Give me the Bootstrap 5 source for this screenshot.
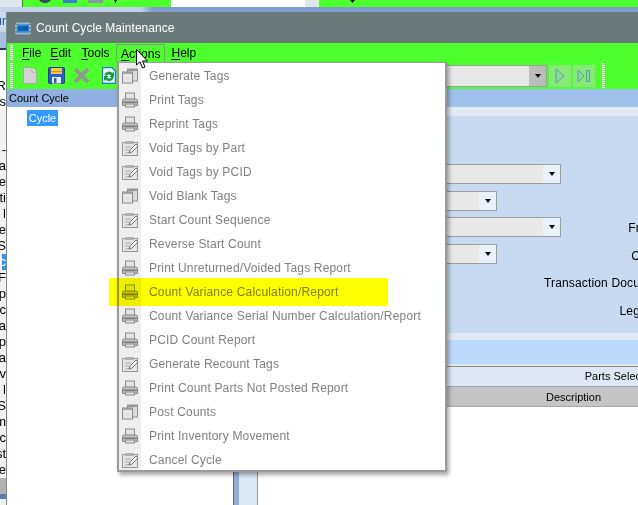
<!DOCTYPE html>
<html lang="en">
<head>
<meta charset="utf-8">
<title>Count Cycle Maintenance</title>
<link rel="stylesheet" href="https://cdn.jsdelivr.net/npm/bootstrap@5.3.0/dist/css/bootstrap.min.css">
<style>
html,body{margin:0;width:638px;height:505px;overflow:hidden;background:#fff}
body{font:12px/16px "Liberation Sans",Arial,sans-serif;color:#000}
.shot{position:relative;width:638px;height:505px;overflow:hidden}
.task-top{height:7px;background:#4eff2e;overflow:hidden}
.task-left{width:23px;background:#dfe6ee;border-right:1px solid #3c7a3c}
.task-blob{height:7px;margin-top:-2px}
.task-field{width:148px;background:#fff;margin-left:auto;display:flex;justify-content:end}
.task-field i{display:block;width:14px;background:#e2e6ea}
.task-strip{height:5px;background:linear-gradient(90deg,#c3d2e6 0,#c3d2e6 22%,#7f9ccb 24%,#7f9ccb 100%)}
.desk{height:493px}
.desk-left{width:6px;overflow:hidden;background:#f2f2f2;flex:none}
.desk-head{height:38px;background:linear-gradient(#c9daf0 0,#c9daf0 50%,#a9bfdf 55%,#a9bfdf 95%,#243a6a 95%);color:#2a5a9a;padding-top:1px;display:flex;justify-content:flex-end}
.desk-gap{height:28px;background:#fff}
.desk-row{height:16px;display:flex;justify-content:flex-end;white-space:nowrap;font-size:13px;background:#f2f2f2}
.desk-row.plain{background:#fff}
.desk-row.sel{background:#3390f0;color:#fff;margin-left:2px}
.desk-foot{height:16px;background:#b2b2b2}
.desk-end{height:5px;background:#5f7fa8}
.win{flex:1 1 auto;min-width:0;border-left:1px solid #7c8c8c;display:flex;flex-direction:column}
.win-title{height:31px;background:#6a7a7a;color:#fff;font-size:12px;letter-spacing:.05px;display:flex;align-items:center;padding:1px 0 0 8px;gap:5px}
.win-menu{height:19px;background:#4eff2e;display:flex;align-items:center;position:relative;font-size:12px}
.grip{width:3px;background:repeating-linear-gradient(#eee 0 1px,#a8c8a8 1px 2px);flex:none}
.win-menu .grip{height:16px;margin:0 6px 0 3px}
.mitem{padding:2px 4.5px 0;line-height:17px;height:19px;white-space:nowrap}
.mitem u{text-underline-offset:2px}
.mitem.tools{margin-left:1.5px;margin-right:2px}
.mitem.on{border:1px solid #8a948a;border-bottom:0;padding:1px 4px 0;line-height:17px;margin-top:1px;height:18px}
.mitem.help{margin-left:1.5px}
.win-tools{height:27px;background:#4eff2e;display:flex;align-items:center;position:relative}
.win-tools .grip{height:25px;margin:0 6px 0 3px}
.tool-ic{display:block;flex:none}
.tool-select{position:absolute;left:300px;right:91px;top:3px;height:22px;background:#e8e8e8;border:1px solid #9aa09a;display:flex;justify-content:flex-end;border-width:1px}
.tool-select b{width:17px;background:#bcbcbc;display:flex;align-items:center;justify-content:center}
.tool-play{position:absolute;top:3px;width:22px;height:22px;background:#88e878;display:flex;align-items:center;justify-content:center}
.tool-play.a{left:542px}
.tool-play.b{left:566px}
.tool-grip{position:absolute;left:595px;top:1px;height:25px}
.arrow{width:0;height:0;border-left:3.5px solid transparent;border-right:3.5px solid transparent;border-top:4px solid #000}
.panes{flex:1 1 auto;display:flex;min-height:0}
.pane-left{width:226px;flex:none;display:flex;flex-direction:column}
.pane-head{height:18px;background:#8fb0e0;padding-left:2px;line-height:18px;font-size:11px}
.pane-tree{flex:1 1 auto;background:#fff;padding:3px 0 0 20px}
.tree-sel{display:inline-block;width:31px;height:16px;background:#3399ff;color:#fff;line-height:16px;text-align:center;font-size:11px}
.pane-right{flex:1 1 auto;min-width:0;display:flex;flex-direction:column}
.right-head{height:18px;background:#9fc2ec}
.right-body{flex:1 1 auto;display:flex;min-height:0}
.split{width:25px;flex:none;border-left:1px solid #6a6a6a;border-right:1px solid #9a9a9a;background:linear-gradient(90deg,#8fb0e0 5px,#dde8f5 5px)}
.main{flex:1 1 auto;min-width:0;display:flex;flex-direction:column}
.main-cap{height:9px;background:#e1e9f3}
.form-area{height:217px;background:#c9daf0;display:flex;overflow:hidden}
.sel-col{display:flex;flex-direction:column;align-items:flex-start;padding-top:48px;gap:6.5px;width:304px;flex:none}
.fsel{height:20px;background:#e8e8e8;border:1px solid #9e9e9e;display:flex;justify-content:flex-end}
.fsel.w1{width:303px}
.fsel.w2{width:239px}
.fsel b{width:17px;background:#e9f1fb;display:flex;align-items:center;justify-content:center}
.lab-col{flex:1 1 auto;min-width:0;padding-top:99px;margin-right:-2px;display:flex;flex-direction:column;align-items:flex-end;font-size:12px;letter-spacing:.15px;line-height:27.7px;white-space:nowrap}
.main-sep{height:7px;background:#dfe8f4}
.main-band{height:24px;background:#bcd9ff}
.main-line{height:3px;background:#e4e4e4;border-bottom:1px solid #8e8e8e}
.main-tab{height:19px;background:#dde8f4;display:flex;justify-content:flex-end;line-height:19px;white-space:nowrap;font-size:11px;overflow:hidden;padding-right:0}
.main-tab span{margin-right:-3px}
.main-th{height:21px;background:#c4c4c4;border-top:1px solid #a8a8a8;border-bottom:1px solid #a8a8a8;padding:1px 0 0 288px;line-height:19px;font-size:11px}
.main-empty{flex:1 1 auto;background:#fff}
.dropdown-menu.act-menu{display:block;left:117px;top:62px;width:330px;height:410px;padding:1px 0;margin:0;border:1px solid #8f8f8f;border-width:1px 2px 2px 2px;border-color:#9a9a9a;border-radius:0;background:linear-gradient(90deg,#eee 22px,#fff 22px);box-shadow:2px 3px 4px rgba(0,0,0,.35);min-width:0}
.act-menu .dropdown-item{height:24px;padding:0 0 0 3px;display:flex;align-items:center;color:#808080;font-size:12px;letter-spacing:.17px;background:transparent;white-space:nowrap}
.act-menu .ic{width:16px;height:16px;margin-right:11px;flex:none;display:block}
.hilite{position:absolute;z-index:1001;left:109px;top:278px;width:279px;height:28px;background:#ffff00;mix-blend-mode:multiply}
.pointer{position:absolute;z-index:1002;left:136px;top:49px;width:12px;height:20px}
</style>
</head>
<body>
<svg width="0" height="0" class="d-block position-absolute">
<defs>
<symbol id="i-win" viewBox="0 0 16 16">
<rect x="5.5" y="1" width="10" height="12" fill="#ddd" stroke="#8c8c8c"/><rect x="5.5" y="1" width="10" height="2" fill="#999"/>
<rect x=".5" y="4" width="10" height="11" fill="#e6e6e6" stroke="#8c8c8c"/><rect x=".5" y="4" width="10" height="2" fill="#a5a5a5"/>
</symbol>
<symbol id="i-print" viewBox="0 0 16 16">
<rect x="3.5" y="1" width="9" height="7" fill="#e2e2e2" stroke="#8c8c8c"/>
<path d="M.5 8.5 Q.5 7 2.500 7H13.500Q15.500 7 15.500 8.500V13.500H.5Z" fill="#c2c2c2" stroke="#858585"/>
<rect x="1" y="9.500" width="14" height="1.500" fill="#7e7e7e"/>
<rect x="3.500" y="12" width="9" height="3" fill="#e2e2e2" stroke="#8c8c8c"/>
</symbol>
<symbol id="i-edit" viewBox="0 0 16 16">
<rect x=".5" y="2.500" width="15" height="13" fill="#e6e6e6" stroke="#969696"/>
<rect x="3" y="1" width="9" height="3" fill="#b0b0b0"/>
<path d="M3 7h6M3 10h4M3 13h5" stroke="#a8a8a8"/>
<path d="M7 13l1-3 6-6 2 2-6 6z" fill="#f2f2f2" stroke="#777"/>
</symbol>
</defs>
</svg>
<div class="shot">
  <div class="task-top d-flex">
    <div class="task-left"></div>
    <svg class="task-blob ms-3 flex-none" width="13" height="7"><ellipse cx="6" cy="1" rx="6" ry="4" fill="#3a4a5a"/></svg>
    <svg class="task-blob flex-none" width="14" height="7" style="margin-left:11px"><rect width="14" height="5" fill="#3a7fd0"/></svg>
    <svg class="task-blob flex-none" width="15" height="7" style="margin-left:11px"><rect width="15" height="5" fill="#8a96a8"/></svg>
    <svg class="task-blob flex-none" width="5" height="7" style="margin-left:10px"><path d="M1 0h3v3h-1v2h-1v-2h-1z" fill="#111"/></svg>
    <div class="task-field" style="margin-left:53px;margin-right:auto"><i></i></div>
    <svg class="task-blob flex-none" width="5" height="7" style="margin-right:283px"><path d="M0 2h5l-2.500 3z" fill="#111"/></svg>
  </div>
  <div class="task-strip"></div>
  <div class="desk d-flex">
    <div class="desk-left">
      <div class="desk-head">ur</div>
      <div class="desk-gap"></div>
      <div class="desk-row plain">R</div>
      <div class="desk-row plain">s</div>
      <div class="desk-row"></div>
      <div class="desk-row"></div>
      <div class="desk-row">-</div>
      <div class="desk-row">Ma</div>
      <div class="desk-row">e</div>
      <div class="desk-row">ti</div>
      <div class="desk-row">l</div>
      <div class="desk-row">e</div>
      <div class="desk-row">S</div>
      <div class="desk-row sel">c</div>
      <div class="desk-row">F</div>
      <div class="desk-row">p</div>
      <div class="desk-row">c</div>
      <div class="desk-row">a</div>
      <div class="desk-row">p</div>
      <div class="desk-row">a</div>
      <div class="desk-row">v</div>
      <div class="desk-row">l</div>
      <div class="desk-row">S</div>
      <div class="desk-row">m</div>
      <div class="desk-row">c</div>
      <div class="desk-row">st</div>
      <div class="desk-row">e</div>
      <div class="desk-foot"></div>
      <div class="desk-end"></div>
    </div>
    <div class="win">
      <div class="win-title">
        <svg class="tool-ic" width="16" height="13" viewBox="0 0 17 13"><rect x="0" y="0" width="17" height="13" rx="2" fill="#9fb6c4"/><rect x="2" y="2" width="13" height="9" rx="1" fill="#2f8fe0"/><rect x="3" y="4" width="11" height="5" fill="#0f5fa8"/><path d="M0 2h2M0 6h2M0 10h2M15 2h2M15 6h2M15 10h2" stroke="#5a6a70"/></svg>
        <span>Count Cycle Maintenance</span>
      </div>
      <div class="win-menu">
        <div class="grip"></div>
        <div class="mitem" style="padding-left:3px"><u>F</u>ile</div>
        <div class="mitem"><u>E</u>dit</div>
        <div class="mitem tools"><u>T</u>ools</div>
        <div class="mitem on"><u>A</u>ctions</div>
        <div class="mitem help"><u>H</u>elp</div>
      </div>
      <div class="win-tools">
        <div class="grip"></div>
        <svg class="tool-ic" style="margin-left:4px" width="14" height="17" viewBox="0 0 14 17"><path d="M.5.5H9L13.500 5V16.500H.5Z" fill="#d2d2d2" stroke="#a8a8a8"/><path d="M9 .5V5H13.500" fill="#eee" stroke="#a8a8a8"/></svg>
        <svg class="tool-ic" style="margin-left:11px" width="17" height="17" viewBox="0 0 17 17"><rect x=".5" y=".5" width="16" height="16" rx="1" fill="#2a5fd0" stroke="#1e3f90"/><rect x="3" y="1" width="11" height="6" fill="#f4c64a"/><rect x="3" y="4" width="11" height="1" fill="#c89a30"/><rect x="4" y="10" width="9" height="6.500" fill="#e8eef8"/><rect x="6" y="11" width="2.500" height="5" fill="#2a5fd0"/></svg>
        <svg class="tool-ic" style="margin-left:8px" width="17" height="17" viewBox="0 0 17 17"><path d="M2 2 8.500 8.500 15 2M2 15 8.500 8.500 15 15" fill="none" stroke="#8e9c8e" stroke-width="4"/></svg>
        <svg class="tool-ic" style="margin-left:12px" width="14" height="17" viewBox="0 0 14 17"><path d="M.5.5H10L13.500 4V16.500H.5Z" fill="#eaf6ff" stroke="#1e7ad0" stroke-width="1.300"/><path d="M2.500 8a4.500 4 0 0 1 8-2l1.500-1v5H7.500l1.500-1.500A2.500 2.200 0 0 0 4.500 9ZM11.500 10a4.500 4 0 0 1-8 2.500L2 14V9h4.500L5 10.500A2.500 2.200 0 0 0 9.500 10Z" fill="#169a3a"/></svg>
        <div class="tool-select"><b><span class="arrow"></span></b></div>
        <div class="tool-play a"><svg width="10" height="16" viewBox="0 0 10 16"><path d="M1 1 9 8 1 15Z" fill="#8fd8a0" stroke="#4fa8a0"/></svg></div>
        <div class="tool-play b"><svg width="14" height="14" viewBox="0 0 14 14"><path d="M1 1 7 7 1 13Z" fill="#8fd8a0" stroke="#4fa8a0"/><rect x="9.500" y="1.500" width="3" height="11" fill="#8fd8a0" stroke="#4fa8a0"/></svg></div>
        <div class="grip tool-grip m-0"></div>
      </div>
      <div class="panes">
        <div class="pane-left">
          <div class="pane-head">Count Cycle</div>
          <div class="pane-tree"><span class="tree-sel">Cycle</span></div>
        </div>
        <div class="pane-right">
          <div class="right-head"></div>
          <div class="right-body">
            <div class="split"></div>
            <div class="main">
              <div class="main-cap"></div>
              <div class="form-area">
                <div class="sel-col">
                  <div class="fsel w1"><b><span class="arrow"></span></b></div>
                  <div class="fsel w2"><b><span class="arrow"></span></b></div>
                  <div class="fsel w1"><b><span class="arrow"></span></b></div>
                  <div class="fsel w2"><b><span class="arrow"></span></b></div>
                </div>
                <div class="lab-col"><div>Fr</div><div>C</div><div>Transaction Docu</div><div>Leg</div></div>
              </div>
              <div class="main-sep"></div>
              <div class="main-band"></div>
              <div class="main-line"></div>
              <div class="main-tab"><span>Parts Selec</span></div>
              <div class="main-th">Description</div>
              <div class="main-empty"></div>
            </div>
          </div>
        </div>
      </div>
    </div>
  </div>

  <div class="dropdown-menu act-menu show position-absolute">
    <a class="dropdown-item" href="#"><svg class="ic"><use href="#i-win"/></svg>Generate Tags</a>
    <a class="dropdown-item" href="#"><svg class="ic"><use href="#i-print"/></svg>Print Tags</a>
    <a class="dropdown-item" href="#"><svg class="ic"><use href="#i-print"/></svg>Reprint Tags</a>
    <a class="dropdown-item" href="#"><svg class="ic"><use href="#i-edit"/></svg>Void Tags by Part</a>
    <a class="dropdown-item" href="#"><svg class="ic"><use href="#i-edit"/></svg>Void Tags by PCID</a>
    <a class="dropdown-item" href="#"><svg class="ic"><use href="#i-win"/></svg>Void Blank Tags</a>
    <a class="dropdown-item" href="#"><svg class="ic"><use href="#i-edit"/></svg>Start Count Sequence</a>
    <a class="dropdown-item" href="#"><svg class="ic"><use href="#i-edit"/></svg>Reverse Start Count</a>
    <a class="dropdown-item" href="#"><svg class="ic"><use href="#i-print"/></svg>Print Unreturned/Voided Tags Report</a>
    <a class="dropdown-item" href="#"><svg class="ic"><use href="#i-print"/></svg>Count Variance Calculation/Report</a>
    <a class="dropdown-item" href="#"><svg class="ic"><use href="#i-print"/></svg>Count Variance Serial Number Calculation/Report</a>
    <a class="dropdown-item" href="#"><svg class="ic"><use href="#i-print"/></svg>PCID Count Report</a>
    <a class="dropdown-item" href="#"><svg class="ic"><use href="#i-edit"/></svg>Generate Recount Tags</a>
    <a class="dropdown-item" href="#"><svg class="ic"><use href="#i-print"/></svg>Print Count Parts Not Posted Report</a>
    <a class="dropdown-item" href="#"><svg class="ic"><use href="#i-win"/></svg>Post Counts</a>
    <a class="dropdown-item" href="#"><svg class="ic"><use href="#i-print"/></svg>Print Inventory Movement</a>
    <a class="dropdown-item" href="#"><svg class="ic"><use href="#i-edit"/></svg>Cancel Cycle</a>
  </div>
  <div class="hilite"></div>
  <svg class="pointer" viewBox="0 0 12 20"><path d="M.5.5V16L4 12.800 6.500 19 9 18 6.500 12H11.500Z" fill="#fff" stroke="#000"/></svg>
</div>
<script src="https://cdn.jsdelivr.net/npm/bootstrap@5.3.0/dist/js/bootstrap.bundle.min.js"></script>
</body>
</html>
